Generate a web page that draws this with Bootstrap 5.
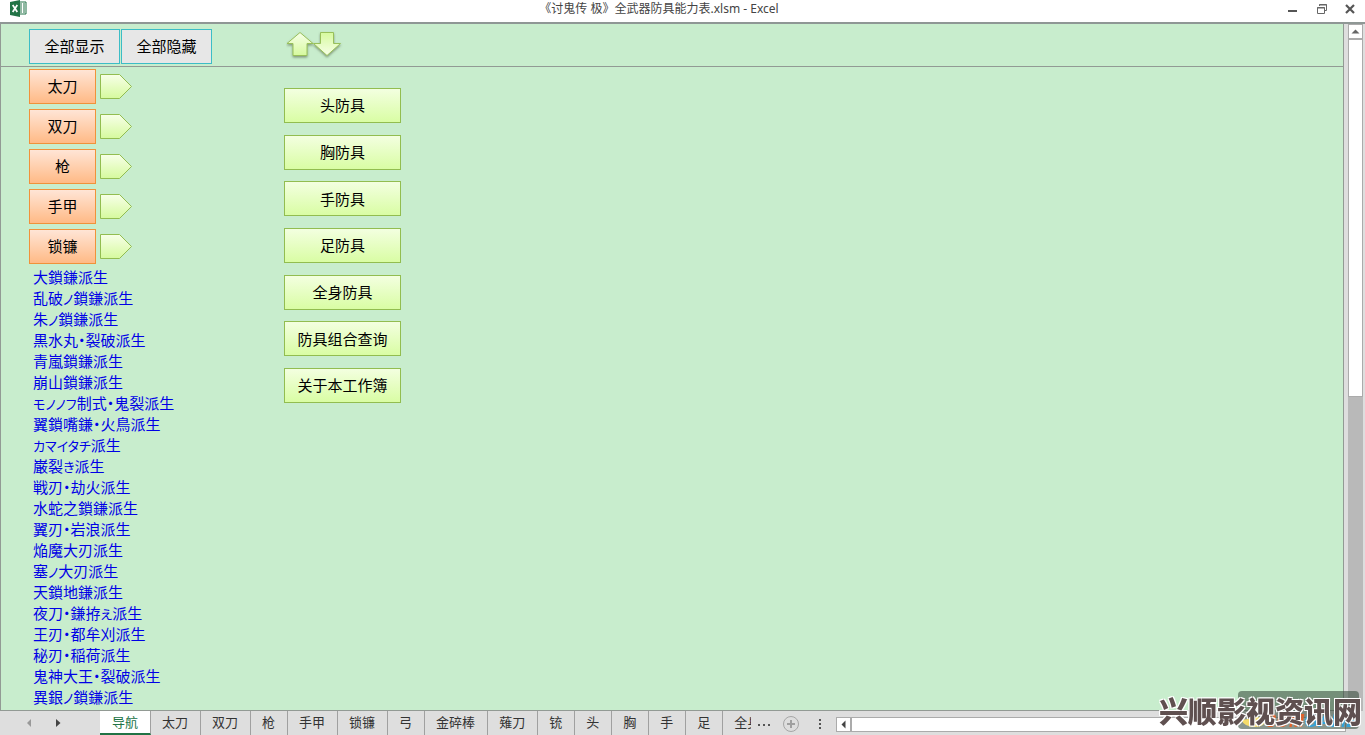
<!DOCTYPE html>
<html lang="zh-CN">
<head>
<meta charset="utf-8">
<meta name="viewport" content="width=device-width, initial-scale=1">
<title>《讨鬼传 极》全武器防具能力表.xlsm - Excel</title>
<link rel="stylesheet" href="https://cdn.jsdelivr.net/npm/bootstrap@5.3.0/dist/css/bootstrap.min.css">
<style>
  body { font-family: "Noto Sans", "Noto Sans CJK SC", sans-serif; color: #000; background: #dedede; }
  .titlebar { display: grid; grid-template-columns: 1fr auto 1fr; height: 22px; background: #fff; padding: 0 9px 4px 10px; }
  .doc-title { font-size: 12px; line-height: 18px; color: #444; margin-right: 48px; }
  .win-controls { margin-left: -48px; gap: 16px; }
  .win-btn { border: 0; background: none; padding: 0; line-height: 0; }
  .work { border-top: 2px solid #8f9795; }
  .sheet { background: #c8edcd; border: 1px solid #929a94; border-width: 0 1px 1px; }
  .frozen { height: 43px; border-bottom: 1px solid #929a94; padding: 5px 0 0 28px; gap: 1px; }
  .tool { width: 91px; height: 35px; border: 1px solid #3dbdc6; background: #e7e7e7; font-size: 15px; padding: 0; color: #000; }
  .arrows { margin-left: 73px; }
  .panes { padding: 2px 0 0 28px; }
  .weapons { width: 255px; }
  .weapon-rows { row-gap: 5px; }
  .weapon { width: 67px; height: 35px; border: 1px solid #f0923a; background: linear-gradient(#ffe5d6, #ffba86); font-size: 15px; padding: 0; color: #000; }
  .derive { list-style: none; margin: 2px 0 0 4px; padding: 0; font: 15px/21px "Noto Sans CJK JP", sans-serif; font-feature-settings: "palt"; }
  .derive a { color: #0000e6; text-decoration: none; white-space: nowrap; }
  .kana { font-size: 13px; line-height: 13px; }
  .armors { height: 315px; margin-top: 19px; }
  .armor { width: 117px; height: 35px; border: 1px solid #92bd50; background: linear-gradient(#f3ffe0, #d9fda4); font-size: 15px; padding: 0; color: #000; }
  .vbar { width: 21px; padding: 0 2px 0 4px; background: #dedede; }
  .bar-btn { width: 15px; height: 15px; border: 1px solid #ababab; background: #fff; padding: 0; line-height: 0; }
  .vbar-thumb { flex: 357 1 0; border: 1px solid #ababab; background: #fff; }
  .vbar-track { flex: 315 1 0; background: #b9b9b9; }
  .bottom { height: 24px; background: #dedede; }
  .tab-nav { width: 100px; padding-left: 26px; gap: 22px; }
  .sheet-tab { flex: none; height: 24px; padding: 0 12px 0 11px; border-right: 1px solid #a0a0a0; font-size: 13px; line-height: 22px; color: #333; text-decoration: none; }
  .sheet-tab.current { padding-left: 12px; background: #fff; color: #217346; border-bottom: 2px solid #217346; }
  .sheet-tab.cut { width: 28px; padding-right: 0; overflow: hidden; border: 0; white-space: nowrap; }
  .hbar { margin: 6px 19px 0 12px; height: 15px; }
  .hbar-thumb { border: 1px solid #ababab; background: #fff; }
  .stamp { position: fixed; right: 3px; bottom: 3px; width: 203px; height: 41px; pointer-events: none; }
  .stamp-plate { position: absolute; right: 3px; top: 0; width: 121px; height: 38px; border-radius: 4px; background: rgba(60, 80, 65, .6); font: italic bold 18px/18px "Liberation Sans", sans-serif; padding: 21px 1px 0 0; text-align: right; white-space: nowrap; }
  .stamp-text { position: absolute; left: 0; top: 0; font: 900 29px/38px "Noto Sans CJK SC", sans-serif; color: #5f5050; white-space: nowrap; text-shadow: 1px 1px #fff, -1px -1px #fff, 1px -1px #fff, -1px 1px #fff; }
</style>
</head>
<body class="vh-100 overflow-hidden d-flex flex-column">

<header class="titlebar">
  <svg width="17" height="17" viewBox="0 0 17 17" aria-hidden="true">
    <path d="M9 2h7v12H9z" fill="#fff" stroke="#217346"/>
    <path d="M10 4h2m1 0h2m-5 2h2m1 0h2m-5 2h2m1 0h2m-5 2h2m1 0h2m-5 2h2m1 0h2" stroke="#217346"/>
    <path d="M0 2 10 0v17L0 15z" fill="#217346"/>
    <path d="m2.700 5 4.600 7M7.300 5l-4.600 7" stroke="#fff" stroke-width="1.700"/>
  </svg>
  <div class="doc-title">《讨鬼传 极》全武器防具能力表.xlsm - Excel</div>
  <div class="win-controls d-flex justify-content-end align-items-center">
    <button class="win-btn" aria-label="最小化"><svg width="12" height="12"><path d="M0 8h9" stroke="#555" stroke-width="2"/></svg></button>
    <button class="win-btn" aria-label="还原"><svg width="12" height="12" fill="none" stroke="#666"><path d="M3.500 3V1.500h7v6H9"/><path d="M3 2h8" /><path d="M1.500 4.500h7v6h-7zM1 5h8"/></svg></button>
    <button class="win-btn" aria-label="关闭"><svg width="12" height="12"><path d="m2 2 8 8m0-8-8 8" stroke="#555" stroke-width="2.200"/></svg></button>
  </div>
</header>

<div class="work d-flex flex-grow-1">
  <main class="sheet flex-grow-1">
    <div class="frozen d-flex">
      <button class="tool">全部显示</button>
      <button class="tool">全部隐藏</button>
      <svg class="arrows" width="58" height="32" viewBox="0 0 58 32" aria-hidden="true">
        <defs>
          <linearGradient id="leaf" x2="0" y2="1"><stop stop-color="#f7ffe8"/><stop offset="1" stop-color="#d6fa9e"/></linearGradient>
          <linearGradient id="leafDown" x2="0" y2="1"><stop stop-color="#d6fa9e"/><stop offset="1" stop-color="#f7ffe8"/></linearGradient>
          <filter id="drop" x="-20%" y="-20%" width="140%" height="150%"><feDropShadow dx="0" dy="1.500" stdDeviation="1" flood-color="#506040" flood-opacity=".6"/></filter>
        </defs>
        <g stroke="#98c05a" filter="url(#drop)">
          <path d="M14 3.500 27 14.500H21v12H7v-12H1z" fill="url(#leaf)"/>
          <path d="M34.500 3.500h13v11H54.500L41 26.500 27.500 14.500h7z" fill="url(#leafDown)"/>
        </g>
      </svg>
    </div>

    <div class="panes d-flex">
      <section class="weapons">
        <div class="weapon-rows d-grid" id="weapons"></div>
        <ul class="derive">
          <li><a href="#">大鎖鎌派生</a></li>
          <li><a href="#">乱破<span class="kana">ノ</span>鎖鎌派生</a></li>
          <li><a href="#">朱<span class="kana">ノ</span>鎖鎌派生</a></li>
          <li><a href="#">黒水丸・裂破派生</a></li>
          <li><a href="#">青嵐鎖鎌派生</a></li>
          <li><a href="#">崩山鎖鎌派生</a></li>
          <li><a href="#"><span class="kana">モノノフ</span>制式・鬼裂派生</a></li>
          <li><a href="#">翼鎖嘴鎌・火鳥派生</a></li>
          <li><a href="#"><span class="kana">カマイタチ</span>派生</a></li>
          <li><a href="#">巌裂<span class="kana">き</span>派生</a></li>
          <li><a href="#">戦刃・劫火派生</a></li>
          <li><a href="#">水蛇之鎖鎌派生</a></li>
          <li><a href="#">翼刃・岩浪派生</a></li>
          <li><a href="#">焔魔大刃派生</a></li>
          <li><a href="#">塞<span class="kana">ノ</span>大刃派生</a></li>
          <li><a href="#">天鎖地鎌派生</a></li>
          <li><a href="#">夜刀・鎌拵<span class="kana">え</span>派生</a></li>
          <li><a href="#">王刃・都牟刈派生</a></li>
          <li><a href="#">秘刃・稲荷派生</a></li>
          <li><a href="#">鬼神大王・裂破派生</a></li>
          <li><a href="#">異銀<span class="kana">ノ</span>鎖鎌派生</a></li>
        </ul>
      </section>
      <section class="armors d-flex flex-column justify-content-between">
        <button class="armor">头防具</button>
        <button class="armor">胸防具</button>
        <button class="armor">手防具</button>
        <button class="armor">足防具</button>
        <button class="armor">全身防具</button>
        <button class="armor">防具组合查询</button>
        <button class="armor">关于本工作簿</button>
      </section>
    </div>
  </main>
  <aside class="vbar d-flex flex-column">
    <button class="bar-btn" aria-label="向上滚动"><svg width="13" height="13"><path d="M2.500 8.500h8l-4-4z" fill="#666"/></svg></button>
    <div class="vbar-thumb"></div>
    <div class="vbar-track"></div>
  </aside>
</div>

<footer class="bottom d-flex flex-shrink-0">
  <div class="tab-nav d-flex align-items-center flex-shrink-0">
    <button class="win-btn" aria-label="上一个"><svg width="8" height="10"><path d="M5 1v8L1 5z" fill="#999"/></svg></button>
    <button class="win-btn" aria-label="下一个"><svg width="8" height="10"><path d="M0 1v8l4.500-4z" fill="#444"/></svg></button>
  </div>
  <nav class="d-flex flex-shrink-0" aria-label="工作表">
    <a class="sheet-tab current" href="#">导航</a>
    <a class="sheet-tab" href="#">太刀</a>
    <a class="sheet-tab" href="#">双刀</a>
    <a class="sheet-tab" href="#">枪</a>
    <a class="sheet-tab" href="#">手甲</a>
    <a class="sheet-tab" href="#">锁镰</a>
    <a class="sheet-tab" href="#">弓</a>
    <a class="sheet-tab" href="#">金碎棒</a>
    <a class="sheet-tab" href="#">薙刀</a>
    <a class="sheet-tab" href="#">铳</a>
    <a class="sheet-tab" href="#">头</a>
    <a class="sheet-tab" href="#">胸</a>
    <a class="sheet-tab" href="#">手</a>
    <a class="sheet-tab" href="#">足</a>
    <a class="sheet-tab cut" href="#">全身</a>
  </nav>
  <svg class="flex-shrink-0" width="73" height="24" viewBox="0 0 73 24" aria-hidden="true">
    <path d="M7 14h2m3 0h2m3 0h2" stroke="#555" stroke-width="2"/>
    <circle cx="40" cy="13" r="7.500" fill="none" stroke="#a6a6a6"/>
    <path d="M36 13h8m-4-4v8" stroke="#a0a0a0" stroke-width="2"/>
    <path d="M69 8v2m0 2v2m0 2v2" stroke="#555" stroke-width="2"/>
  </svg>
  <div class="hbar d-flex flex-grow-1">
    <button class="bar-btn" aria-label="向左滚动"><svg width="13" height="13"><path d="M8.500 2.500v8l-4-4z" fill="#444"/></svg></button>
    <div class="hbar-thumb flex-grow-1"></div>
  </div>
</footer>

<div class="stamp">
  <div class="stamp-plate">
    <svg class="position-absolute start-0 bottom-0" width="40" height="24" aria-hidden="true"><path d="M3 14q8 2 12-3l13 3q-1 8-11 8Q6 22 3 14z" fill="#f5dc6a"/></svg>
    <span style="color:#e0632c">3DM</span><span style="color:#35a3d8">GAME</span>
  </div>
  <div class="stamp-text">兴顺影视资讯网</div>
</div>

<script src="https://cdn.jsdelivr.net/npm/bootstrap@5.3.0/dist/js/bootstrap.bundle.min.js"></script>
<script>
  document.getElementById('weapons').innerHTML = ['太刀', '双刀', '枪', '手甲', '锁镰'].map(name => `
    <div class="d-flex align-items-center gap-1">
      <button class="weapon">${name}</button>
      <button class="win-btn" aria-label="展开${name}"><svg width="33" height="27"><path d="M.5 1.500h19l12 12-12 12H.5z" fill="url(#leaf)" stroke="#92bd50"/></svg></button>
    </div>`).join('');
</script>
</body>
</html>
